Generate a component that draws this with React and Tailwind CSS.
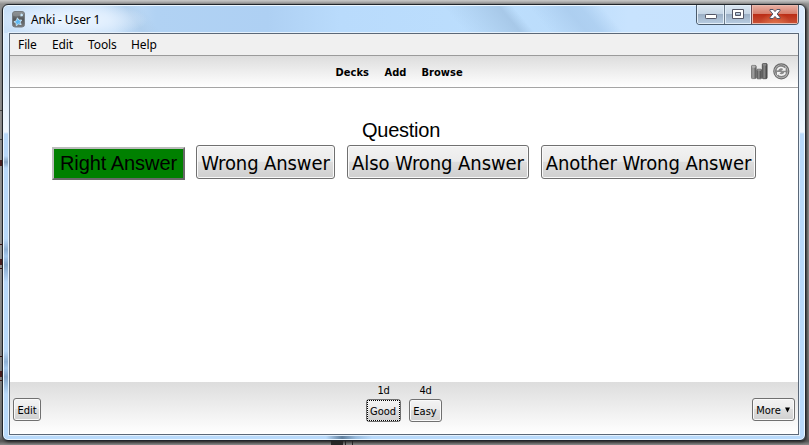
import React from 'react';

const TAHOMA = "font-['DejaVu_Sans_Condensed','DejaVu_Sans',sans-serif] [font-stretch:condensed]";

const answerBase =
  'flex h-[34px] shrink-0 items-center justify-center whitespace-nowrap rounded-[3px] border border-[#707070] bg-[linear-gradient(#f2f2f2_0%,#ebebeb_48%,#dddddd_50%,#cfcfcf_100%)] pt-[2px] text-[20px] leading-none text-black shadow-[inset_0_0_0_1px_#fafafa]';

const smallBase =
  'flex h-[23px] items-center justify-center whitespace-nowrap rounded-[3px] border border-[#707070] bg-[linear-gradient(#f3f3f3_0%,#ebebeb_48%,#dddddd_50%,#d0d0d0_100%)] pt-[1px] text-[11px] leading-none text-black shadow-[inset_0_0_0_1px_#fafafa]';

function AnkiIcon() {
  return (
    <svg width="13" height="17" viewBox="0 0 13 17">
      <defs>
        <linearGradient id="deck" x1="0" y1="0" x2="0" y2="1">
          <stop offset="0" stopColor="#85898c" />
          <stop offset="0.5" stopColor="#55595c" />
          <stop offset="1" stopColor="#7a7c7e" />
        </linearGradient>
      </defs>
      <rect x="0.5" y="0.5" width="12" height="15.5" rx="2.5" fill="url(#deck)" stroke="#777d82" />
      <path d="M1 4.5 Q5 7 12 3 V2 L10 1 H3 L1 2Z" fill="#94999c" opacity=".6" />
      <path d="M5.4 6.8 6.9 9.1 9.7 9 8.2 11.2 9.2 13.7 6.5 13 4.3 14.7 4.1 12.1 1.9 10.8 4.4 9.7Z" fill="#5db8f2" stroke="#d5edfc" strokeWidth="0.8" />
      <path d="M9 2.1 9.9 3.2 11.3 2.9 10.6 4.1 11.2 5.3 9.8 5 8.8 5.9 8.7 4.6 7.5 3.9 8.8 3.4Z" fill="#c9eaff" />
    </svg>
  );
}

function StatsIcon() {
  return (
    <svg width="17" height="17" viewBox="0 0 17 17">
      <defs>
        <linearGradient id="bar" x1="0" x2="1">
          <stop offset="0" stopColor="#747474" />
          <stop offset="0.35" stopColor="#a6a6a6" />
          <stop offset="1" stopColor="#505050" />
        </linearGradient>
        <linearGradient id="barDark" x1="0" x2="1">
          <stop offset="0" stopColor="#505050" />
          <stop offset="0.4" stopColor="#8b8b8b" />
          <stop offset="1" stopColor="#3d3d3d" />
        </linearGradient>
      </defs>
      <rect x="0.4" y="2.4" width="4.8" height="13.2" rx="1" fill="url(#bar)" stroke="#707070" strokeWidth="0.8" />
      <rect x="1" y="2.8" width="3.6" height="2" rx="0.8" fill="#b5b5b5" />
      <rect x="5.8" y="6.2" width="4.8" height="9.6" rx="1" fill="url(#barDark)" stroke="#606060" strokeWidth="0.8" />
      <rect x="6.4" y="6.2" width="3.6" height="1.8" rx="0.8" fill="#909090" />
      <rect x="11.3" y="0.5" width="4.8" height="15.2" rx="1" fill="url(#barDark)" stroke="#4c4c4c" strokeWidth="0.8" />
      <rect x="11.8" y="0.7" width="3.6" height="2" rx="0.8" fill="#888" />
    </svg>
  );
}

function SyncIcon() {
  return (
    <svg width="17" height="17" viewBox="0 0 17 17">
      <circle cx="8.3" cy="8.3" r="7.5" fill="#c4c4c4" stroke="#6c6c6c" strokeWidth="1.2" />
      <circle cx="8.3" cy="8.3" r="5.8" fill="#8a8a8a" stroke="#777" strokeWidth="0.9" />
      <path d="M4.4 7.4 C5.2 3.9 9.8 3.7 11.2 6.3" fill="none" stroke="#f2f2f2" strokeWidth="1.6" />
      <path d="M8.3 7.7H12.6V4.2Z" fill="#f2f2f2" />
      <path d="M12.2 9.2 C11.4 12.7 6.8 12.9 5.4 10.3" fill="none" stroke="#f2f2f2" strokeWidth="1.6" />
      <path d="M8.3 8.9H4V12.4Z" fill="#f2f2f2" />
    </svg>
  );
}

function CaptionButtons() {
  return (
    <div className="flex h-[20px] w-[103px] overflow-hidden rounded-b-[4px] border border-t-0 border-[#4b5b6c]">
      <div className="flex w-[28px] items-center justify-center border-r border-[#6c7c8d] bg-[linear-gradient(#dbe7f3_0%,#c5d5e5_48%,#9cb0c6_50%,#b9cde2_100%)] shadow-[inset_0_0_0_1px_#e3eef8]">
        <svg width="12" height="6" viewBox="0 0 12 6" className="mt-[4px]">
          <rect x="0.5" y="0.5" width="11" height="4" rx="0.7" fill="#fff" stroke="#535666" />
        </svg>
      </div>
      <div className="flex w-[27px] items-center justify-center border-r border-[#6c4850] bg-[linear-gradient(#dbe7f3_0%,#c5d5e5_48%,#9cb0c6_50%,#b9cde2_100%)] shadow-[inset_0_0_0_1px_#e3eef8]">
        <svg width="12" height="10" viewBox="0 0 12 10" className="mt-[-1px]">
          <path d="M0.5 0.5H11.5V9.5H0.5Z M3.5 3.5V6.5H8.5V3.5Z" fill="#fff" fillRule="evenodd" stroke="#535666" />
        </svg>
      </div>
      <div className="flex flex-1 items-center justify-center bg-[radial-gradient(ellipse_at_50%_120%,#e57b50_0%,transparent_50%),linear-gradient(#e9b2a5_0%,#d67d6b_47%,#bb2d16_50%,#ca5338_100%)] shadow-[inset_0_0_0_1px_#eab9ad]">
        <svg width="12" height="10" viewBox="0 0 12 10" className="mt-[-1px]">
          <path d="M1 0.5H4.2L6 2.6 7.8 0.5H11V1.6L8.2 5 11 8.4V9.5H7.8L6 7.4 4.2 9.5H1V8.4L3.8 5 1 1.6Z" fill="#fff" stroke="#535666" strokeWidth="1" />
        </svg>
      </div>
    </div>
  );
}

// Soft streaks of light and shade across the glass title bar.
function TitleGlass() {
  return (
    <div className="absolute inset-x-[1px] top-[1px] h-[27px] overflow-hidden rounded-t-[4px] bg-[linear-gradient(90deg,#c9e0f8_0%,#cbe2f9_13%,#b1d2f3_19%,#aed0f3_33%,#b9dbfc_42%,#bcdefd_62%,#bbdcfb_70%,#c8e3fe_78%,#c8e2fd_90%,#dcebfe_100%)]">
      <div className="absolute left-[104px] top-0 h-[27px] w-[44px] skew-x-[35deg] bg-[linear-gradient(90deg,transparent,#a6c6e5_60%,transparent)] opacity-50" />
      <div className="absolute left-[450px] top-0 h-[27px] w-[70px] skew-x-[40deg] bg-[linear-gradient(90deg,transparent,#a5c6e6_80%,transparent)] opacity-90" />
      <div className="absolute left-[535px] top-0 h-[27px] w-[74px] skew-x-[40deg] bg-[linear-gradient(90deg,transparent,#a9cbed_50%,#abcdef_70%,transparent)] opacity-80" />
      <div className="absolute left-[-6px] top-[-4px] h-[36px] w-[150px] bg-[radial-gradient(closest-side,#eff7ff_0%,#e5f1ffcc_50%,transparent_100%)]" />
    </div>
  );
}

const desktopMarks = [
  'top-[110px] h-[1px] bg-[#444]',
  'top-[139px] h-[1px] bg-[#444]',
  'top-[160px] h-[6px] bg-[#4a1c1c]',
  'top-[244px] h-[1px] bg-[#3a1010]',
  'top-[259px] h-[6px] bg-[#4a1c1c]',
  'top-[268px] h-[1px] bg-[#3a1010]',
  'top-[356px] h-[1px] bg-[#3a1010]',
  'top-[371px] h-[6px] bg-[#4a1c1c]',
  'top-[380px] h-[1px] bg-[#3a1010]',
];

export default function App() {
  return (
    <div className="relative h-[445px] w-[809px] overflow-hidden bg-[linear-gradient(#c9c9c9_0px,#929292_4px,#8e8e8e_30px,#999_240px,#777_436px,#565656_441px,#8b8b8b_445px)] pl-[2px] pt-[4px]">
      {desktopMarks.map((m) => (
        <div key={m} className={`absolute left-0 w-[2px] ${m}`} />
      ))}
      <div className="absolute left-[331px] top-[441px] h-[4px] w-[12px] bg-[#292929]" />
      <div className="absolute left-[345px] top-[441px] h-[4px] w-[8px] border-x border-[#292929]" />

      <div className="relative flex h-[437px] w-[804px] flex-col rounded-[6px] border border-[#20252b] bg-[linear-gradient(#dcecfd_0px,#d4e8fc_60px,#eff6fd_127px,#b9d9fa_129px,#b9dafb_437px)] px-[6px] shadow-[inset_0_0_0_1px_#edf7ff,1px_1px_3px_#222]">
        <TitleGlass />
        <div className="absolute left-[1px] top-[151px] h-[12px] w-[5px] bg-[linear-gradient(transparent,#7e9ab7,transparent)] opacity-80" />
        <div className="absolute left-[1px] top-[234px] h-[43px] w-[5px] bg-[linear-gradient(transparent,#8fb1d5_25%,#a4c9ee_40%,#86a8cc_60%,transparent)]" />
        <div className="absolute left-[1px] top-[346px] h-[43px] w-[5px] bg-[linear-gradient(transparent,#8fb1d5_25%,#a4c9ee_40%,#86a8cc_60%,transparent)]" />
        <div className="absolute bottom-[1px] left-[323px] h-[5px] w-[46px] bg-[linear-gradient(90deg,transparent,#60809f_35%,#98bcdf_65%,transparent)]" />

        <header className="relative flex h-[28px] shrink-0 items-start justify-between">
          <div className="flex items-center pl-[3px] pt-[6px]">
            <AnkiIcon />
            <h1 className="ml-[6px] whitespace-nowrap font-['Noto_Sans',sans-serif] text-[12px] leading-[17px] tracking-[-0.12px] text-black">
              Anki - User 1
            </h1>
          </div>
          <CaptionButtons />
        </header>

        <main className="relative flex h-[402px] w-[790px] shrink-0 flex-col border border-[#5b6878] bg-white shadow-[0_0_0_1px_#e4f1fd]">
          <nav className="flex h-[22px] shrink-0 items-center border-b border-[#9b9b9b] bg-[#f0f0f0] pl-[8px] font-['Noto_Sans',sans-serif] text-[12px] leading-none tracking-[-0.1px] text-black">
            <span className="w-[34px]">File</span>
            <span className="w-[36px]">Edit</span>
            <span className="w-[43px]">Tools</span>
            <span>Help</span>
          </nav>

          <div className="grid h-[32px] shrink-0 grid-cols-[1fr_auto_1fr] items-center border-b border-[#a5a5a5] bg-[linear-gradient(#dddddd,#ffffff)]">
            <div />
            <div className={`${TAHOMA} flex pr-[8px] pt-[1px] text-[11px] font-bold leading-none tracking-[0.05px] text-black`}>
              <span className="w-[49px]">Decks</span>
              <span className="w-[37px]">Add</span>
              <span className="w-[43px]">Browse</span>
            </div>
            <div className="flex justify-end gap-[5px] pr-[8px]">
              <StatsIcon />
              <SyncIcon />
            </div>
          </div>

          <section className="h-[294px] shrink-0 bg-white pt-[31px]">
            <p className="pr-[6px] text-center font-['Liberation_Sans',Arial,sans-serif] text-[20px] leading-[22px] tracking-[-0.25px] text-black">
              Question
            </p>
            <div className="flex items-start pl-[42px] pt-[4px]">
              <button className="mr-[11px] mt-[2px] flex h-[33px] w-[133px] items-center justify-center whitespace-nowrap border-2 border-b-[#696969] border-l-[#bcbcbc] border-r-[#696969] border-t-[#bcbcbc] bg-[#008000] pb-[2px] font-['Liberation_Sans',Arial,sans-serif] text-[20px] leading-none tracking-[-0.05px] text-black">
                Right Answer
              </button>
              <button className={`${TAHOMA} ${answerBase} mr-[12px] w-[139px] tracking-[-0.1px]`}>Wrong Answer</button>
              <button className={`${TAHOMA} ${answerBase} mr-[12px] w-[182px] tracking-[-0.07px]`}>Also Wrong Answer</button>
              <button className={`${TAHOMA} ${answerBase} w-[215px] tracking-[-0.08px]`}>Another Wrong Answer</button>
            </div>
          </section>

          <footer className={`${TAHOMA} grid flex-1 grid-cols-[1fr_auto_1fr] items-start bg-[linear-gradient(#dddddd,#ffffff)] text-[11px] text-black`}>
            <div className="pl-[3px] pt-[16px]">
              <button className={`${smallBase} w-[28px]`}>Edit</button>
            </div>
            <div className="flex gap-[8px]">
              <div className="flex flex-col items-center">
                <span className="h-[17px] leading-[17px] tracking-[-0.3px]">1d</span>
                <button className={`${smallBase} relative w-[35px] pr-[1px]`}>
                  Good
                  <span className="absolute inset-0 border border-dotted border-black" />
                </button>
              </div>
              <div className="flex flex-col items-center">
                <span className="h-[17px] leading-[17px] tracking-[-0.3px]">4d</span>
                <button className={`${smallBase} w-[33px] pr-[1px]`}>Easy</button>
              </div>
            </div>
            <div className="flex justify-end pr-[3px] pt-[16px]">
              <button className={`${smallBase} w-[43px] gap-[4px] pr-[1px]`}>
                More
                <svg width="5" height="6" viewBox="0 0 5 6">
                  <path d="M0 0.5H5L2.5 5.5Z" fill="#000" />
                </svg>
              </button>
            </div>
          </footer>
        </main>
      </div>
    </div>
  );
}
